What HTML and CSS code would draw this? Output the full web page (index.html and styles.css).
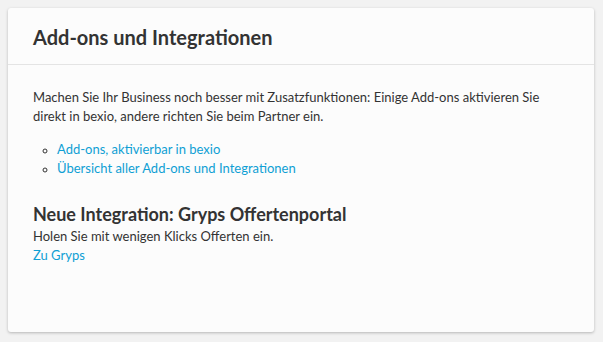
FILE: index.html
```html
<!DOCTYPE html>
<html lang="de">
<head>
<meta charset="utf-8">
<link rel="stylesheet" href="styles.css">
</head>
<body>
<div class="card">
  <div class="card-header">
    <h2 class="card-title">Add-ons und Integrationen</h2>
  </div>
  <div class="card-body">
    <p class="intro">Machen Sie Ihr Business noch besser mit Zusatzfunktionen: Einige Add-ons aktivieren Sie direkt in bexio, andere richten Sie beim Partner ein.</p>
    <ul class="links">
      <li><a href="#">Add-ons, aktivierbar in bexio</a></li>
      <li><a href="#">Übersicht aller Add-ons und Integrationen</a></li>
    </ul>
    <h3 class="sub-title">Neue Integration: Gryps Offertenportal</h3>
    <p class="sub-text">Holen Sie mit wenigen Klicks Offerten ein.</p>
    <a class="sub-link" href="#">Zu Gryps</a>
  </div>
</div>
</body>
</html>
```

FILE: styles.css
```css
html, body {
  margin: 0;
  padding: 0;
}
body {
  background: #f2f2f2;
  font-family: Lato, "Open Sans", sans-serif;
  color: #333;
  padding: 8px 9px 10px 8px;
}
.card {
  background: #fcfcfc;
  border-radius: 3px;
  box-shadow: 0 1px 3px rgba(0,0,0,0.25);
  height: 324px;
  box-sizing: border-box;
}
.card-header {
  height: 57px;
  border-bottom: 1px solid #e4e4e4;
  display: flex;
  align-items: center;
  padding: 0 25px;
  box-sizing: border-box;
}
.card-title {
  margin: 0;
  font-size: 20px;
  font-weight: 700;
  color: #333;
  padding-top: 1px;
}
.card-body {
  padding: 23px 25px;
  font-size: 13px;
  line-height: 19px;
}
.intro {
  margin: 0 0 14px;
}
.links {
  margin: 0 0 23px;
  padding-left: 24px;
  list-style: circle;
}
.links li::marker {
  font-size: 11px;
}
a {
  color: #0f9fd4;
  text-decoration: none;
}
.sub-title {
  margin: 0;
  font-size: 18px;
  font-weight: 700;
  line-height: 26px;
}
.sub-text {
  margin: 0;
}
.sub-link {
  display: block;
}
```
